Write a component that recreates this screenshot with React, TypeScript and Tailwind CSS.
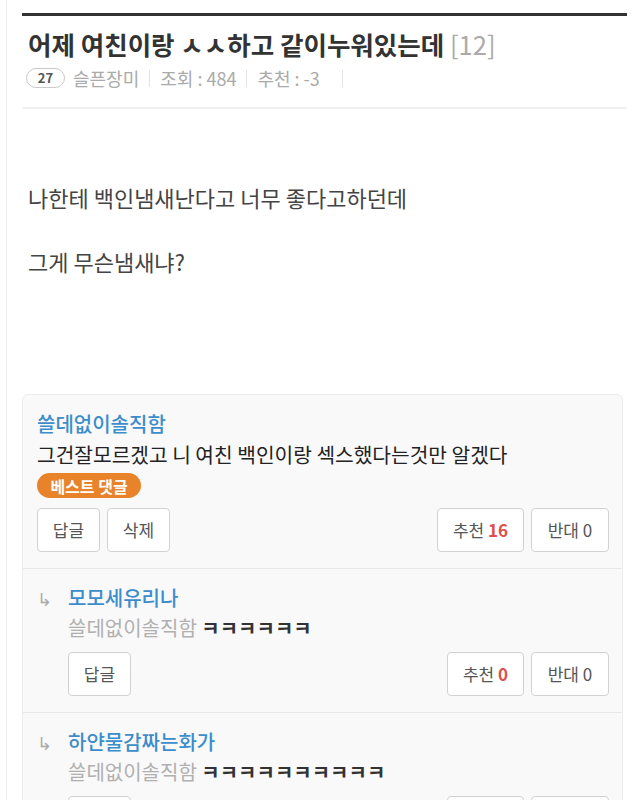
import React from "react";

const FONT = { fontFamily: '"Noto Sans CJK KR", "Noto Sans", Roboto, sans-serif' };

function Btn({ children, w }: { children: React.ReactNode; w: string }) {
  return (
    <div
      className={`flex h-[44px] items-center justify-center rounded-[4px] border border-[#d2d2d2] bg-white text-[17px] text-[#555] ${w}`}
    >
      {children}
    </div>
  );
}

function Reply({
  name,
  kk,
  up,
}: {
  name: string;
  kk: string;
  up: number;
}) {
  return (
    <div className="flex border-t border-[#e9e9e9] pl-[14px] pr-[13px] pt-[14px] pb-[16px]">
      <div className="w-[31px] text-[18px] leading-[30px] text-[#aaa]">↳</div>
      <div className="flex-1">
        <div className="text-[20px] font-medium leading-[30px] text-[#3c8dcb]">{name}</div>
        <div className="text-[20px] leading-[30px] text-[#b0b0b0]">
          쓸데없이솔직함 <span className="font-bold text-[#333]">{kk}</span>
        </div>
        <div className="mt-[9px] flex items-center">
          <Btn w="w-[63px]">답글</Btn>
          <div className="ml-auto flex gap-[7px]">
            <Btn w="w-[77px]">
              추천&nbsp;<span className="font-bold text-[#e0504a]">{up}</span>
            </Btn>
            <Btn w="w-[78px]">반대 0</Btn>
          </div>
        </div>
      </div>
    </div>
  );
}

export default function App() {
  return (
    <div className="h-[800px] overflow-hidden bg-white pl-[6px]" style={FONT}>
      <div className="min-h-[800px] border-l border-[#efefef] pl-[15px] pr-[10px] pt-[13px]">
        <div className="h-[3px] bg-[#333]" />
        <h1 className="mt-[12px] px-[6px] text-[25.5px] font-bold leading-[32px] text-[#333]">
          어제 여친이랑 ㅅㅅ하고 같이누워있는데{" "}
          <span className="font-normal text-[#aaa]">[12]</span>
        </h1>
        <div className="mt-[8px] flex h-[20px] items-center px-[4px] text-[18px] text-[#aaa]">
          <span className="flex h-[20px] w-[39px] items-center justify-center rounded-full border border-[#c9c9c9] text-[13px] font-bold text-[#555]">
            27
          </span>
          <span className="ml-[8px]">슬픈장미</span>
          <span className="mx-[10px] h-[17px] w-px bg-[#e3e3e3]" />
          <span>조회 : 484</span>
          <span className="mx-[10px] h-[17px] w-px bg-[#e3e3e3]" />
          <span>추천 : -3</span>
          <span className="mx-[22px] h-[17px] w-px bg-[#e3e3e3]" />
        </div>
        <div className="mt-[19px] h-[2px] bg-[#f0f0f0]" />
        <div className="mt-[72px] px-[6px] text-[22px] leading-[32px] text-[#444]">
          <p>나한테 백인냄새난다고 너무 좋다고하던데</p>
          <p>&nbsp;</p>
          <p>그게 무슨냄새냐?</p>
        </div>
        <div className="mr-[4px] mt-[117px] rounded-[6px] border border-[#ececec] bg-[#f9f9f9]">
          <div className="pl-[14px] pr-[13px] pt-[14px] pb-[16px]">
            <div className="text-[20px] font-medium leading-[30px] text-[#3c8dcb]">쓸데없이솔직함</div>
            <div className="text-[20.3px] leading-[30px] text-[#222]">
              그건잘모르겠고 니 여친 백인이랑 섹스했다는것만 알겠다
            </div>
            <div className="mt-[4px] flex">
              <span className="flex h-[25px] w-[104px] items-center justify-center rounded-full bg-[#e8832a] text-[16px] font-bold text-white">
                베스트 댓글
              </span>
            </div>
            <div className="mt-[10px] flex items-center">
              <div className="flex gap-[7px]">
                <Btn w="w-[63px]">답글</Btn>
                <Btn w="w-[63px]">삭제</Btn>
              </div>
              <div className="ml-auto flex gap-[7px]">
                <Btn w="w-[87px]">
                  추천&nbsp;<span className="font-bold text-[#e0504a]">16</span>
                </Btn>
                <Btn w="w-[78px]">반대 0</Btn>
              </div>
            </div>
          </div>
          <Reply name="모모세유리나" kk="ㅋㅋㅋㅋㅋㅋ" up={0} />
          <Reply name="하얀물감짜는화가" kk="ㅋㅋㅋㅋㅋㅋㅋㅋㅋㅋ" up={0} />
        </div>
      </div>
    </div>
  );
}
